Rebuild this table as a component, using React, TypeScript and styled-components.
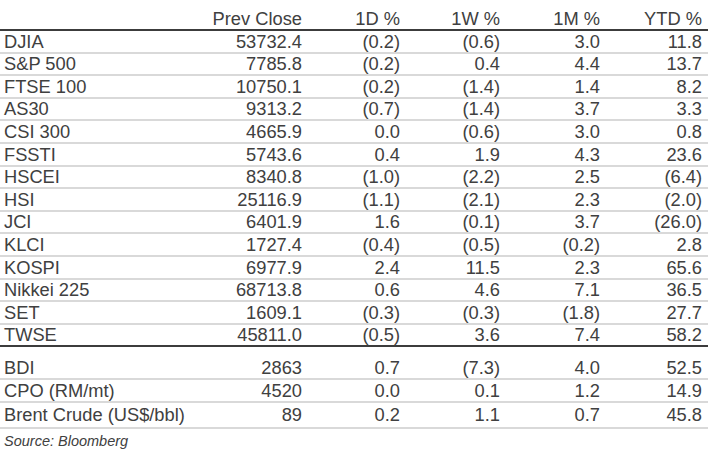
import React from 'react';
import styled, { createGlobalStyle } from 'styled-components';

const GlobalStyle = createGlobalStyle`
  html, body {
    margin: 0;
    padding: 0;
    background: #ffffff;
  }
  body {
    font-family: "Liberation Sans", Arial, sans-serif;
    color: #404040;
  }
`

const Table = styled.div`
  width: 708px;
  display: flex;
  flex-direction: column;
`

const Section = styled.div<{ gap?: number }>`
  display: flex;
  flex-direction: column;
  margin-top: ${p => p.gap || 0}px;
`

const Row = styled.div<{ h?: number; heavy?: boolean }>`
  display: grid;
  grid-template-columns: 198px 100px 98px 100px 100px 102px;
  align-items: center;
  box-sizing: border-box;
  height: ${p => p.h || 22.6}px;
  padding: 1px 6px 0 4px;
  border-bottom: 2px solid ${p => (p.heavy ? '#3c3c3c' : '#d9d9d9')};
  font-size: 18.3px;
  line-height: 1;
`

const HeaderRow = styled(Row)`
  align-items: end;
  padding-bottom: 1px;
`

const Label = styled.div`
  white-space: nowrap;
`

const Num = styled.div`
  text-align: right;
  white-space: nowrap;
`

const Source = styled.div`
  font-style: italic;
  font-size: 14.5px;
  padding: 4px 0 0 4px;
`

type Line = [string, string, string, string, string, string];

const indices: Line[] = [
  ['DJIA', '53732.4', '(0.2)', '(0.6)', '3.0', '11.8'],
  ['S&P 500', '7785.8', '(0.2)', '0.4', '4.4', '13.7'],
  ['FTSE 100', '10750.1', '(0.2)', '(1.4)', '1.4', '8.2'],
  ['AS30', '9313.2', '(0.7)', '(1.4)', '3.7', '3.3'],
  ['CSI 300', '4665.9', '0.0', '(0.6)', '3.0', '0.8'],
  ['FSSTI', '5743.6', '0.4', '1.9', '4.3', '23.6'],
  ['HSCEI', '8340.8', '(1.0)', '(2.2)', '2.5', '(6.4)'],
  ['HSI', '25116.9', '(1.1)', '(2.1)', '2.3', '(2.0)'],
  ['JCI', '6401.9', '1.6', '(0.1)', '3.7', '(26.0)'],
  ['KLCI', '1727.4', '(0.4)', '(0.5)', '(0.2)', '2.8'],
  ['KOSPI', '6977.9', '2.4', '11.5', '2.3', '65.6'],
  ['Nikkei 225', '68713.8', '0.6', '4.6', '7.1', '36.5'],
  ['SET', '1609.1', '(0.3)', '(0.3)', '(1.8)', '27.7'],
  ['TWSE', '45811.0', '(0.5)', '3.6', '7.4', '58.2'],
];

const commodities: Line[] = [
  ['BDI', '2863', '0.7', '(7.3)', '4.0', '52.5'],
  ['CPO (RM/mt)', '4520', '0.0', '0.1', '1.2', '14.9'],
  ['Brent Crude (US$/bbl)', '89', '0.2', '1.1', '0.7', '45.8'],
];

const Cells: React.FC<{ line: Line }> = ({ line }) => (
  <>
    <Label>{line[0]}</Label>
    {line.slice(1).map((v, i) => (
      <Num key={i}>{v}</Num>
    ))}
  </>
);

const App: React.FC = () => {
  return (
    <>
      <GlobalStyle />
      <Table>
        <HeaderRow h={31} heavy>
          <Cells line={['', 'Prev Close', '1D %', '1W %', '1M %', 'YTD %']} />
        </HeaderRow>
        <Section>
          {indices.map((line, i) => (
            <Row key={line[0]} heavy={i === indices.length - 1}>
              <Cells line={line} />
            </Row>
          ))}
        </Section>
        <Section gap={10}>
          {commodities.map((line, i) => (
            <Row key={line[0]} h={i === commodities.length - 1 ? 26 : 22.6}>
              <Cells line={line} />
            </Row>
          ))}
        </Section>
        <Source>Source: Bloomberg</Source>
      </Table>
    </>
  );
}

export default App;
